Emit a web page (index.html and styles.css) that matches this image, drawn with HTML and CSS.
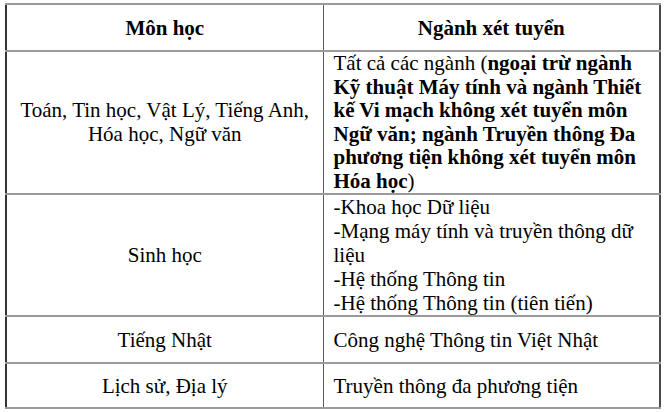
FILE: index.html
```html
<!DOCTYPE html>
<html lang="vi">
<head>
<meta charset="utf-8">
<title>Môn học và ngành xét tuyển</title>
<link rel="stylesheet" href="styles.css">
</head>
<body>
<table class="subjects">
  <colgroup>
    <col class="col-subject">
    <col class="col-major">
  </colgroup>
  <thead>
    <tr class="row-head">
      <th>Môn học</th>
      <th>Ngành xét tuyển</th>
    </tr>
  </thead>
  <tbody>
    <tr class="row-1">
      <td class="subject">Toán, Tin học, Vật Lý, Tiếng Anh, Hóa học, Ngữ văn</td>
      <td class="major">Tất cả các ngành (<b>ngoại trừ ngành Kỹ thuật Máy tính và ngành Thiết kế Vi mạch không xét tuyển môn Ngữ văn; ngành Truyền thông Đa phương tiện không xét tuyển môn Hóa học</b>)</td>
    </tr>
    <tr class="row-2">
      <td class="subject">Sinh học</td>
      <td class="major">-Khoa học Dữ liệu<br>-Mạng máy tính và truyền thông dữ liệu<br>-Hệ thống Thông tin<br>-Hệ thống Thông tin (tiên tiến)</td>
    </tr>
    <tr class="row-3">
      <td class="subject">Tiếng Nhật</td>
      <td class="major">Công nghệ Thông tin Việt Nhật</td>
    </tr>
    <tr class="row-4">
      <td class="subject">Lịch sử, Địa lý</td>
      <td class="major">Truyền thông đa phương tiện</td>
    </tr>
  </tbody>
</table>
</body>
</html>
```

FILE: styles.css
```css
html, body {
  margin: 0;
  padding: 0;
  background: #ffffff;
}

body {
  padding: 3px 0 0 5px;
  font-family: "Liberation Serif", "Times New Roman", serif;
  font-size: 21px;
  line-height: 24px;
  color: #000000;
}

.subjects {
  border-collapse: collapse;
  table-layout: fixed;
  width: 654px;
  border-left: 2px solid #333333;
  border-right: 2px solid #4a4a4a;
  border-top: 2px solid #888888;
  border-bottom: 2px solid #a0a0a0;
}

.col-subject {
  width: 317px;
}

.col-major {
  width: 337px;
}

.subjects th,
.subjects td {
  border-top: 2px solid #9a9a9a;
  border-bottom: 2px solid #9a9a9a;
  border-left: 1px solid #5a5a5a;
  border-right: 1px solid #5a5a5a;
  padding: 0 10px;
}

.subjects th {
  font-weight: bold;
  text-align: center;
  vertical-align: middle;
  height: 45px;
}

.subject {
  text-align: center;
  vertical-align: middle;
}

.major {
  text-align: left;
  vertical-align: middle;
}

.major b {
  font-weight: bold;
}

.row-1 td {
  height: 141px;
  line-height: 23.5px;
}

.row-2 td {
  height: 120px;
}

.row-3 td {
  height: 45px;
}

.row-4 td {
  height: 43px;
}
```
